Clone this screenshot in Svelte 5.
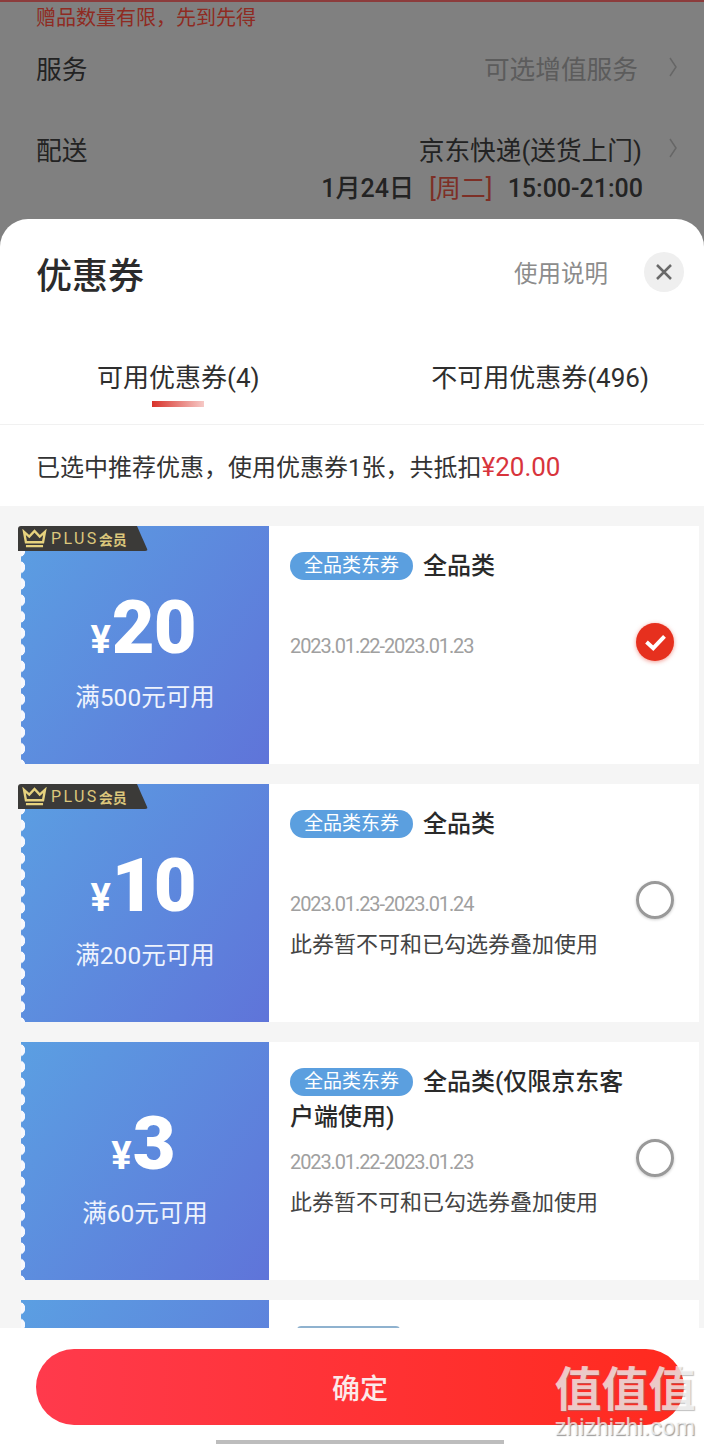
<script>
  const coupons = [
    { amount: '20', rule: '满500元可用', plus: true, title: '全品类', date: '2023.01.22-2023.01.23', note: '', selected: true },
    { amount: '10', rule: '满200元可用', plus: true, title: '全品类', date: '2023.01.23-2023.01.24', note: '此券暂不可和已勾选券叠加使用', selected: false },
    { amount: '3', rule: '满60元可用', plus: false, title: '全品类(仅限京东客户端使用)', date: '2023.01.22-2023.01.23', note: '此券暂不可和已勾选券叠加使用', selected: false }
  ];
</script>

<div class="page">
  <div class="backdrop">
    <div class="gift">赠品数量有限，先到先得</div>
    <div class="row service">
      <span>服务</span>
      <span class="row-value muted">可选增值服务</span>
      <svg class="chevron" viewBox="0 0 10 22" aria-hidden="true"><path d="M2 2l6 9-6 9" /></svg>
    </div>
    <div class="row delivery">
      <span>配送</span>
      <span class="row-value">京东快递(送货上门)</span>
      <svg class="chevron" viewBox="0 0 10 22" aria-hidden="true"><path d="M2 2l6 9-6 9" /></svg>
    </div>
    <div class="slot">1月24日 <span class="weekday">[周二]</span> 15:00-21:00</div>
  </div>

  <section class="sheet">
    <header class="sheet-head">
      <h1>优惠券</h1>
      <span class="help">使用说明</span>
      <span class="close">
        <svg viewBox="0 0 16 16" aria-hidden="true"><path d="M1 1l14 14M15 1L1 15" /></svg>
      </span>
    </header>

    <nav class="tabs">
      <div class="tab">
        <span>可用优惠券(4)</span>
        <i class="tab-bar"></i>
      </div>
      <div class="tab">
        <span>不可用优惠券(496)</span>
      </div>
    </nav>

    <div class="summary">已选中推荐优惠，使用优惠券1张，共抵扣<em>¥20.00</em></div>

    <div class="list">
      {#each coupons as c}
        <article class="coupon">
          <div class="ticket">
            {#if c.plus}
              <div class="plus">
                <svg viewBox="0 0 28 20" aria-hidden="true"><path d="M3 3l5.500 5L14 2l5.500 6L25 3l-2 11H5zM5 18h18" /></svg>
                <span class="plus-en">PLUS</span><span class="plus-cn">会员</span>
              </div>
            {/if}
            <div class="amount"><small>¥</small>{c.amount}</div>
            <div class="rule">{c.rule}</div>
          </div>
          <div class="detail">
            <div class="info">
              <div class="title"><span class="tag">全品类东券</span>{c.title}</div>
              <div class="date">{c.date}</div>
              {#if c.note}
                <div class="note">{c.note}</div>
              {/if}
            </div>
            {#if c.selected}
              <span class="radio on">
                <svg viewBox="0 0 20 16" aria-hidden="true"><path d="M2 8l6 5.500L18 3" /></svg>
              </span>
            {:else}
              <span class="radio"></span>
            {/if}
          </div>
        </article>
      {/each}
      <!-- next coupon, only its top edge shows above the footer -->
      <article class="coupon">
        <div class="ticket"></div>
        <div class="detail"><i class="tag stub"></i></div>
      </article>
    </div>

    <footer class="foot">
      <button class="confirm">确定</button>
      <i class="home"></i>
    </footer>
  </section>

  <div class="watermark">
    <div class="wm-cn">值值值</div>
    <div class="wm-en">zhizhizhi.com</div>
  </div>
</div>

<style>
  :global(body) {
    margin: 0;
  }
  .page {
    position: relative;
    width: 704px;
    height: 1444px;
    overflow: hidden;
    display: flex;
    flex-direction: column;
    background: #808080;
    font-family: Roboto, "Noto Sans CJK SC", sans-serif;
    color: #222;
  }
  .backdrop {
    height: 219px;
    flex-shrink: 0;
    box-sizing: border-box;
    border-top: 2px solid #8c3c3c;
    padding: 3px 26px 0 36px;
    font-size: 25.700px;
    color: #232323;
  }
  .gift {
    font-size: 20px;
    line-height: 26px;
    color: #8f2b22;
  }
  .row {
    display: flex;
    align-items: center;
    height: 36px;
  }
  .service {
    margin-top: 18px;
  }
  .delivery {
    margin-top: 45px;
  }
  .row-value {
    margin-left: auto;
  }
  .service .row-value {
    margin-right: 4px;
  }
  .muted {
    color: #5c5c5c;
  }
  .chevron {
    width: 10px;
    height: 22px;
    margin-left: 26px;
    fill: none;
    stroke: #666;
    stroke-width: 1.500;
  }
  .slot {
    margin-top: 5px;
    padding-right: 35px;
    text-align: right;
    line-height: 36px;
    font-size: 25px;
    font-weight: 500;
  }
  .weekday {
    margin: 0 9px;
    font-weight: 400;
    color: #7d2f26;
  }

  .sheet {
    flex: 1;
    min-height: 0;
    display: flex;
    flex-direction: column;
    background: #fff;
    border-radius: 28px 28px 0 0;
    overflow: hidden;
  }
  .sheet-head {
    display: flex;
    align-items: center;
    padding: 34px 20px 0 36px;
  }
  h1 {
    margin: 0;
    font-size: 36px;
    line-height: 48px;
    font-weight: 500;
    color: #2b2b2b;
  }
  .help {
    margin: -10px 0 0 auto;
    font-size: 23.500px;
    color: #8c8c8c;
  }
  .close {
    display: flex;
    align-items: center;
    justify-content: center;
    width: 40px;
    height: 40px;
    margin: -10px 0 0 36px;
    border-radius: 50%;
    background: #efefef;
  }
  .close svg {
    width: 16px;
    height: 16px;
    fill: none;
    stroke: #6a6a6a;
    stroke-width: 2.500;
  }
  .tabs {
    display: flex;
    justify-content: space-between;
    margin-top: 58px;
    padding: 0 55px 17px 97px;
    border-bottom: 1px solid #f1f1f1;
    font-size: 26px;
    line-height: 36px;
    color: #2e2e2e;
  }
  .tab {
    display: flex;
    flex-direction: column;
    align-items: center;
    height: 48px;
  }
  .tab span {
    position: relative;
    top: 1px;
  }
  .tab-bar {
    width: 52px;
    height: 6px;
    margin-top: 6px;
    background: linear-gradient(90deg, #d8322a, #f6c9c6);
  }
  .summary {
    height: 81px;
    flex-shrink: 0;
    padding-left: 36px;
    line-height: 84px;
    font-size: 24px;
    color: #333;
  }
  .summary em {
    font-style: normal;
    font-size: 26px;
    color: #d8343c;
  }
  .list {
    flex: 1;
    min-height: 0;
    overflow: hidden;
    padding: 20px 5px 0 21px;
    background: #f5f5f5;
  }
  .coupon {
    display: flex;
    height: 238px;
    margin-bottom: 20px;
    background: #fff;
  }
  .ticket {
    position: relative;
    width: 248px;
    flex-shrink: 0;
    display: flex;
    flex-direction: column;
    align-items: center;
    color: #fff;
    background: linear-gradient(125deg, #5b9fe2, #5f74d9);
  }
  .ticket::before {
    content: '';
    position: absolute;
    left: 0;
    top: 0;
    bottom: 0;
    width: 5px;
    background: radial-gradient(circle at -2px 50%, #f7f8fd 6px, transparent 6.500px) 0 0 / 5px 16.500px repeat-y;
  }
  .plus {
    position: absolute;
    z-index: 1;
    left: -3px;
    top: 0;
    width: 130px;
    height: 25px;
    display: flex;
    align-items: center;
    padding-left: 3px;
    box-sizing: border-box;
    background: #3b3a38;
    border-radius: 3px 0 3px 0;
    clip-path: polygon(0 0, 119px 0, 100% 100%, 0 100%);
    color: #dcc77c;
  }
  .plus svg {
    width: 27px;
    height: 19px;
    fill: none;
    stroke: #e6d27e;
    stroke-width: 2.500;
  }
  .plus-en {
    margin-left: 3px;
    font-size: 16px;
    letter-spacing: 2.400px;
  }
  .plus-cn {
    font-size: 14px;
    font-weight: 700;
  }
  .amount {
    margin-top: 60px;
    padding-right: 4px;
    height: 84px;
    line-height: 84px;
    font-size: 74px;
    font-weight: 900;
    letter-spacing: -1px;
  }
  .amount small {
    font-size: 38px;
    margin-right: 2px;
    font-weight: 700;
  }
  .rule {
    margin-top: 11px;
    line-height: 34px;
    font-size: 24.500px;
    color: #eef3fd;
  }
  .detail {
    flex: 1;
    min-width: 0;
    display: flex;
    padding-left: 21px;
    padding-right: 24px;
  }
  .info {
    flex: 1;
    min-width: 0;
  }
  .title {
    box-sizing: border-box;
    height: 84px;
    padding-top: 23px;
    line-height: 35px;
    font-size: 24px;
    font-weight: 500;
    color: #2a2a2a;
  }
  .tag {
    display: inline-block;
    height: 28px;
    width: 123px;
    margin-right: 10px;
    border-radius: 14px;
    background: #5b9fdf;
    color: #fff;
    text-align: center;
    line-height: 28px;
    font-size: 19px;
    font-weight: 400;
    vertical-align: 2px;
  }
  .tag.stub {
    margin-top: 26px;
    margin-left: 7px;
    width: 103px;
    background: #8fb2cf;
    border-radius: 4px;
  }
  .date {
    margin-top: 22px;
    line-height: 28px;
    font-size: 20px;
    letter-spacing: -1.100px;
    color: #a0a0a0;
  }
  .note {
    margin-top: 12px;
    line-height: 30px;
    font-size: 22px;
    color: #444;
  }
  .radio {
    flex-shrink: 0;
    width: 38px;
    height: 38px;
    margin: 97px 1px 0 0;
    box-sizing: border-box;
    border-radius: 50%;
    border: 3px solid #999;
    box-shadow: 0 1px 3px rgba(0, 0, 0, 0.2);
  }
  .radio.on {
    display: flex;
    align-items: center;
    justify-content: center;
    border: none;
    background: #e6301e;
    box-shadow: 0 1px 4px rgba(230, 48, 30, 0.5);
  }
  .radio.on svg {
    width: 23px;
    height: 18px;
    fill: none;
    stroke: #fff;
    stroke-width: 3.500;
  }
  .foot {
    height: 116px;
    flex-shrink: 0;
    display: flex;
    flex-direction: column;
    align-items: center;
    padding: 21px 0 0 16px;
    box-sizing: border-box;
    background: #fff;
  }
  .confirm {
    width: 648px;
    height: 76px;
    flex-shrink: 0;
    border: none;
    border-radius: 38px;
    background: linear-gradient(90deg, #ff3a4c, #ff2a1e);
    color: #fbe9e9;
    font-family: inherit;
    font-size: 28px;
    font-weight: 500;
    padding: 0;
    text-align: center;
  }
  .home {
    width: 288px;
    height: 4px;
    margin-top: 15px;
    background: #bdbdbd;
  }
  .watermark {
    position: absolute;
    left: 553px;
    top: 1360px;
    width: 144px;
    text-align: center;
    color: rgba(255, 255, 255, 0.7);
    pointer-events: none;
  }
  .wm-cn {
    font-size: 47px;
    line-height: 60px;
    font-weight: 700;
    white-space: nowrap;
    text-shadow: 1px 1px 1px rgba(130, 130, 130, 0.5);
  }
  .wm-en {
    font-size: 23px;
    line-height: 24px;
    margin-top: -4px;
    text-shadow: 1px 1px 1px rgba(110, 110, 110, 0.7);
  }
</style>
